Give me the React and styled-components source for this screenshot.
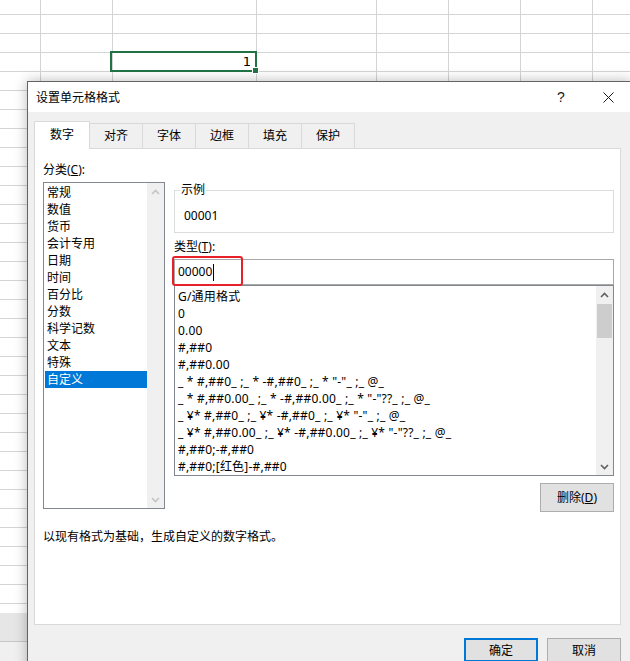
import React from 'react';
import styled, { createGlobalStyle } from 'styled-components';

const GlobalStyle = createGlobalStyle`
  html, body {
    margin: 0;
    padding: 0;
    overflow: hidden;
    background: #ffffff;
  }
  body {
    font-family: "Noto Sans", "Noto Sans CJK SC", sans-serif;
    font-size: 12px;
    color: #000000;
  }
`;

const columnWidths = [41, 72, 144, 120, 72, 72, 72, 80];
const rowCount = 33;

const categories = [
  '常规',
  '数值',
  '货币',
  '会计专用',
  '日期',
  '时间',
  '百分比',
  '分数',
  '科学记数',
  '文本',
  '特殊',
  '自定义',
];

const formats = [
  'G/通用格式',
  '0',
  '0.00',
  '#,##0',
  '#,##0.00',
  '_ * #,##0_ ;_ * -#,##0_ ;_ * "-"_ ;_ @_',
  '_ * #,##0.00_ ;_ * -#,##0.00_ ;_ * "-"??_ ;_ @_',
  '_ ¥* #,##0_ ;_ ¥* -#,##0_ ;_ ¥* "-"_ ;_ @_',
  '_ ¥* #,##0.00_ ;_ ¥* -#,##0.00_ ;_ ¥* "-"??_ ;_ @_',
  '#,##0;-#,##0',
  '#,##0;[红色]-#,##0',
];

const tabs = ['数字', '对齐', '字体', '边框', '填充', '保护'];

const Chevron = ({ up, color }) => (
  <svg width="9" height="6" viewBox="0 0 9 6">
    <polyline
      points={up ? '1,5 4.5,1.5 8,5' : '1,1 4.5,4.5 8,1'}
      fill="none"
      stroke={color}
      strokeWidth="1.6"
    />
  </svg>
);

const App = () => {
  return (
    <StyledPage>
      <GlobalStyle />
      <StyledSheet>
        {Array.from({ length: rowCount }).map((_, r) => (
          <StyledSheetRow key={r}>
            {columnWidths.map((w, c) => {
              const selected = r === 3 && c === 2;
              return (
                <StyledSheetCell key={c} $w={w} $selected={selected}>
                  {selected && '1'}
                  {selected && <StyledFillHandle />}
                </StyledSheetCell>
              );
            })}
          </StyledSheetRow>
        ))}
      </StyledSheet>
      <StyledSheetTabs />
      <StyledStatusStrip />

      <StyledDialog>
        <StyledTitleBar>
          <StyledTitle>设置单元格格式</StyledTitle>
          <StyledTitleButton $w={48}>?</StyledTitleButton>
          <StyledTitleButton $w={46}>
            <svg width="11" height="11" viewBox="0 0 11 11">
              <path d="M0.5 0.5 L10.5 10.5 M10.5 0.5 L0.5 10.5" stroke="#1a1a1a" strokeWidth="1" />
            </svg>
          </StyledTitleButton>
        </StyledTitleBar>

        <StyledTabRow>
          {tabs.map((t, i) => (
            <StyledTab key={t} $active={i === 0}>
              {t}
            </StyledTab>
          ))}
        </StyledTabRow>

        <StyledPanel>
          <StyledColumns>
            <StyledLeftCol>
              <StyledFieldLabel>
                分类(<u>C</u>):
              </StyledFieldLabel>
              <StyledListBox $width={122} $height={327}>
                <StyledListItems>
                  {categories.map((c, i) => (
                    <StyledListItem key={c} $selected={i === categories.length - 1}>
                      {c}
                    </StyledListItem>
                  ))}
                </StyledListItems>
                <StyledScrollBar>
                  <StyledScrollArrow>
                    <Chevron up color="#c4c4c4" />
                  </StyledScrollArrow>
                  <StyledScrollTrack />
                  <StyledScrollArrow>
                    <Chevron color="#c4c4c4" />
                  </StyledScrollArrow>
                </StyledScrollBar>
              </StyledListBox>
            </StyledLeftCol>

            <StyledRightCol>
              <StyledGroupBox>
                <StyledGroupCaption>示例</StyledGroupCaption>
                <StyledSampleValue>00001</StyledSampleValue>
              </StyledGroupBox>

              <StyledTypeLabel>
                类型(<u>T</u>):
              </StyledTypeLabel>
              <StyledTypeInput>
                00000
                <StyledCaret />
                <StyledHighlight />
              </StyledTypeInput>

              <StyledListBox $width={440} $height={191}>
                <StyledListItems $padTop={2}>
                  {formats.map(f => (
                    <StyledListItem key={f} $spaced>
                      {f}
                    </StyledListItem>
                  ))}
                </StyledListItems>
                <StyledScrollBar>
                  <StyledScrollArrow>
                    <Chevron up color="#606060" />
                  </StyledScrollArrow>
                  <StyledScrollTrack>
                    <StyledScrollThumb />
                  </StyledScrollTrack>
                  <StyledScrollArrow>
                    <Chevron color="#606060" />
                  </StyledScrollArrow>
                </StyledScrollBar>
              </StyledListBox>

              <StyledActionRow>
                <StyledDialogButton $h={29}>
                  删除(<u>D</u>)
                </StyledDialogButton>
              </StyledActionRow>
            </StyledRightCol>
          </StyledColumns>

          <StyledDescription>以现有格式为基础，生成自定义的数字格式。</StyledDescription>
        </StyledPanel>

        <StyledFooter>
          <StyledDialogButton $primary $h={24}>
            确定
          </StyledDialogButton>
          <StyledDialogButton $h={24}>取消</StyledDialogButton>
        </StyledFooter>
      </StyledDialog>
    </StyledPage>
  );
};

const StyledPage = styled.div`
  position: relative;
  width: 630px;
  height: 661px;
  overflow: hidden;
  background: #ffffff;
`;

const StyledSheet = styled.div`
  margin-top: -4px;
  height: 617px;
  overflow: hidden;
`;

const StyledSheetRow = styled.div`
  display: flex;
  height: 19px;
`;

const StyledSheetCell = styled.div`
  position: relative;
  flex: 0 0 ${props => props.$w}px;
  box-sizing: border-box;
  border-right: 1px solid #d4d4d4;
  border-bottom: 1px solid #d4d4d4;
  font-family: "DejaVu Sans", sans-serif;
  font-size: 13px;
  line-height: 18px;
  text-align: right;
  padding-right: 5px;
  color: #000;

  ${props =>
    props.$selected &&
    `
    &::after {
      content: '';
      position: absolute;
      left: -3px;
      top: -2px;
      right: -1px;
      bottom: -1px;
      border: 2px solid #217346;
    }
  `}
`;

const StyledFillHandle = styled.span`
  position: absolute;
  right: -3px;
  bottom: -3px;
  width: 5px;
  height: 5px;
  background: #217346;
  border: 1px solid #ffffff;
  z-index: 1;
`;

const StyledSheetTabs = styled.div`
  height: 28px;
  background: #e6e6e6;
  border-bottom: 1px solid #c6c6c6;
`;

const StyledStatusStrip = styled.div`
  height: 30px;
  background: #f0f0f0;
`;

const StyledDialog = styled.div`
  position: absolute;
  left: 27px;
  top: 81px;
  width: 605px;
  height: 610px;
  box-sizing: border-box;
  border: 1px solid #646464;
  background: #f0f0f0;
  box-shadow: 0 0 12px rgba(0, 0, 0, 0.28);
`;

const StyledTitleBar = styled.div`
  display: flex;
  align-items: center;
  height: 30px;
  background: #ffffff;
`;

const StyledTitle = styled.div`
  flex: 1;
  padding-left: 8px;
  font-size: 12px;
  line-height: 16px;
  padding-top: 1px;
`;

const StyledTitleButton = styled.div`
  width: ${props => props.$w}px;
  height: 30px;
  display: flex;
  align-items: center;
  justify-content: center;
  font-family: "Liberation Sans", sans-serif;
  font-size: 14px;
  color: #1a1a1a;
`;

const StyledTabRow = styled.div`
  display: flex;
  align-items: flex-end;
  padding: 9px 0 0 6px;
`;

const StyledTab = styled.div`
  position: relative;
  z-index: ${props => (props.$active ? 1 : 0)};
  box-sizing: border-box;
  width: ${props => (props.$active ? 56 : 54)}px;
  height: ${props => (props.$active ? 28 : 25)}px;
  margin-bottom: ${props => (props.$active ? -1 : 0)}px;
  margin-left: ${props => (props.$active ? 0 : -1)}px;
  border: 1px solid #d9d9d9;
  border-bottom: none;
  background: ${props => (props.$active ? '#ffffff' : '#f0f0f0')};
  display: flex;
  justify-content: center;
  padding-top: ${props => (props.$active ? 5 : 4)}px;
  font-size: 12px;
  line-height: 16px;
`;

const StyledPanel = styled.div`
  box-sizing: border-box;
  margin-left: 6px;
  width: 587px;
  height: 477px;
  background: #ffffff;
  border: 1px solid #d9d9d9;
  padding: 13px 6px 0 8px;
`;

const StyledColumns = styled.div`
  display: flex;
  gap: 9px;
`;

const StyledLeftCol = styled.div`
  display: flex;
  flex-direction: column;
  width: 122px;
`;

const StyledRightCol = styled.div`
  display: flex;
  flex-direction: column;
  width: 440px;
  padding-top: 28px;
`;

const StyledFieldLabel = styled.div`
  line-height: 16px;
  margin-bottom: 4px;
`;

const StyledTypeLabel = styled.div`
  line-height: 16px;
  margin: 6px 0 4px;
`;

const StyledListBox = styled.div`
  display: flex;
  box-sizing: border-box;
  width: ${props => props.$width}px;
  height: ${props => props.$height}px;
  border: 1px solid #828790;
  background: #ffffff;
  overflow: hidden;
`;

const StyledListItems = styled.div`
  flex: 1;
  padding: ${props => props.$padTop || 1}px 0 0 1px;
  overflow: hidden;
`;

const StyledListItem = styled.div`
  height: 17px;
  line-height: 17px;
  padding-left: 2px;
  white-space: pre;
  letter-spacing: ${props => (props.$spaced ? '0.2px' : 'normal')};
  background: ${props => (props.$selected ? '#0078d7' : 'transparent')};
  color: ${props => (props.$selected ? '#ffffff' : '#000000')};
`;

const StyledScrollBar = styled.div`
  display: flex;
  flex-direction: column;
  width: 17px;
  background: #f0f0f0;
`;

const StyledScrollArrow = styled.div`
  height: 17px;
  display: flex;
  align-items: center;
  justify-content: center;
`;

const StyledScrollTrack = styled.div`
  flex: 1;
  padding: 1px 1px 0;
`;

const StyledScrollThumb = styled.div`
  height: 34px;
  background: #cdcdcd;
`;

const StyledGroupBox = styled.div`
  position: relative;
  box-sizing: border-box;
  height: 43px;
  border: 1px solid #dcdcdc;
  padding: 17px 0 0 9px;
`;

const StyledGroupCaption = styled.span`
  position: absolute;
  left: 5px;
  top: -9px;
  padding: 0 1px;
  background: #ffffff;
  line-height: 16px;
`;

const StyledSampleValue = styled.div`
  line-height: 16px;
`;

const StyledTypeInput = styled.div`
  position: relative;
  box-sizing: border-box;
  height: 26px;
  border: 1px solid #a8a8a8;
  display: flex;
  align-items: center;
  padding-left: 3px;
  line-height: 16px;
`;

const StyledCaret = styled.span`
  display: inline-block;
  width: 1px;
  height: 17px;
  margin-left: 1px;
  background: #000000;
`;

const StyledHighlight = styled.span`
  position: absolute;
  left: -3px;
  top: -4px;
  width: 71px;
  height: 30px;
  box-sizing: border-box;
  border: 2px solid #e8202a;
  border-radius: 3px;
`;

const StyledActionRow = styled.div`
  display: flex;
  justify-content: flex-end;
  margin-top: 7px;
`;

const StyledDialogButton = styled.div`
  box-sizing: border-box;
  width: 74px;
  height: ${props => props.$h}px;
  display: flex;
  align-items: center;
  justify-content: center;
  background: #e1e1e1;
  border: ${props => (props.$primary ? '2px solid #0078d7' : '1px solid #adadad')};
  line-height: 16px;
  padding-top: 1px;
`;

const StyledDescription = styled.div`
  margin-top: 17px;
  line-height: 16px;
`;

const StyledFooter = styled.div`
  display: flex;
  justify-content: flex-end;
  gap: 9px;
  width: 593px;
  margin-top: 13px;
`;

export default App;
